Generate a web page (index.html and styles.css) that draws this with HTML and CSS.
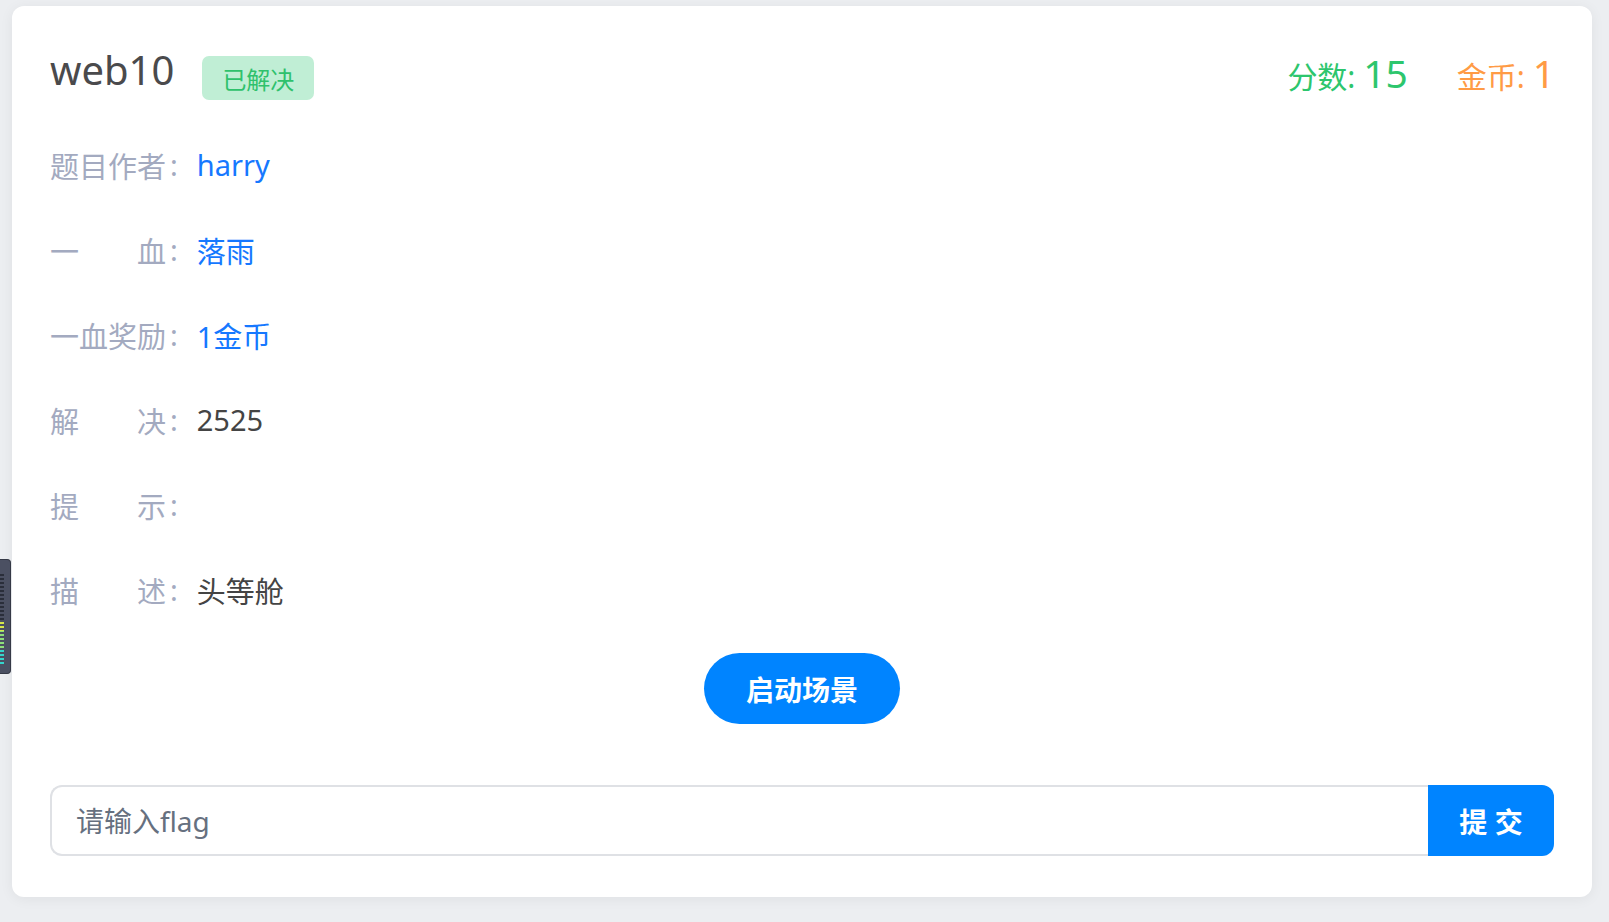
FILE: index.html
```html
<!DOCTYPE html>
<html lang="zh">
<head>
<meta charset="utf-8">
<title>web10</title>
<link rel="stylesheet" href="styles.css">
</head>
<body>
<div class="side-widget"><div class="dashes"></div></div>
<div class="card">
  <div class="header">
    <div class="title-wrap">
      <h1 class="title">web10</h1>
      <span class="badge">已解决</span>
    </div>
    <div class="stats">
      <span class="stat score">分数: <b>15</b></span>
      <span class="stat coin">金币: <b>1</b></span>
    </div>
  </div>
  <div class="rows">
    <div class="row"><span class="label"><span class="name">题目作者</span><span class="colon">:</span></span><span class="value link">harry</span></div>
    <div class="row"><span class="label"><span class="name">一血</span><span class="colon">:</span></span><span class="value link">落雨</span></div>
    <div class="row"><span class="label"><span class="name">一血奖励</span><span class="colon">:</span></span><span class="value link">1金币</span></div>
    <div class="row"><span class="label"><span class="name">解决</span><span class="colon">:</span></span><span class="value">2525</span></div>
    <div class="row"><span class="label"><span class="name">提示</span><span class="colon">:</span></span><span class="value"></span></div>
    <div class="row"><span class="label"><span class="name">描述</span><span class="colon">:</span></span><span class="value">头等舱</span></div>
  </div>
  <div class="launch-wrap"><button class="launch">启动场景</button></div>
  <div class="flag-row">
    <input class="flag-input" type="text" placeholder="请输入flag">
    <button class="submit">提 交</button>
  </div>
</div>
</body>
</html>
```
FILE: styles.css
```css
* { box-sizing: border-box; }
html, body { margin: 0; padding: 0; }
body {
  background: #eceef1;
  font-family: "Noto Sans", "Noto Sans CJK SC", sans-serif;
  width: 1609px;
  height: 922px;
  overflow: hidden;
  position: relative;
}
.card {
  margin: 6px 17px 0 12px;
  height: 891px;
  background: #fff;
  border-radius: 12px;
  box-shadow: 0 2px 14px rgba(0,0,0,0.06);
  padding: 50px 38px 36px 38px;
  display: flex;
  flex-direction: column;
}
.header {
  display: flex;
  justify-content: space-between;
  align-items: flex-start;
  height: 44px;
}
.title-wrap { display: flex; align-items: flex-start; }
.title {
  margin: -8px 0 0 0;
  font-size: 40px;
  line-height: 44px;
  font-weight: 400;
  color: #4a4a4c;
}
.badge {
  margin-left: 28px;
  width: 112px;
  height: 44px;
  border-radius: 7px;
  background: #c0eed5;
  color: #2fc16c;
  font-size: 24px;
  display: flex;
  align-items: center;
  justify-content: center;
}
.stats { display: flex; gap: 49px; margin-top: -5px; margin-right: -1px; align-items: baseline; }
.stat { font-size: 30px; line-height: 44px; }
.stat b { font-weight: 400; font-size: 39px; }
.score { color: #2dc66d; }
.coin { color: #ff9b45; }
.rows { margin-top: 22px; display: flex; flex-direction: column; }
.row {
  height: 85px;
  display: flex;
  align-items: center;
  font-size: 29px;
}
.label { color: #a3aac0; display: flex; align-items: center; margin-right: 19px; }
.colon { margin-left: 4px; }
.name {
  display: inline-block;
  width: 4em;
  text-align: justify;
  text-align-last: justify;
}
.value { color: #444; }
.value.link { color: #1678ff; }
.launch-wrap { display: flex; justify-content: center; margin-top: 21px; }
.launch {
  width: 196px;
  height: 71px;
  border: none;
  border-radius: 36px;
  background: #0084ff;
  color: #fff;
  font-family: inherit;
  font-size: 28px;
  font-weight: 700;
}
.flag-row { display: flex; margin-top: 61px; height: 71px; }
.flag-input {
  flex: 1;
  height: 71px;
  border: 2px solid #dfe1e5;
  border-right: none;
  border-radius: 12px 0 0 12px;
  padding: 0 0 0 24px;
  font-family: inherit;
  font-size: 28px;
  color: #333;
  outline: none;
}
.flag-input::placeholder { color: #66707f; }
.submit {
  width: 126px;
  height: 71px;
  border: none;
  border-radius: 0 12px 12px 0;
  background: #0084ff;
  color: #fff;
  font-family: inherit;
  font-size: 28px;
  font-weight: 700;
  letter-spacing: 0;
  padding: 0;
}
.side-widget {
  position: absolute;
  left: 0;
  top: 559px;
  width: 11px;
  height: 115px;
  background: #4b5062;
  border: 1px solid #353946;
  border-left: none;
  border-radius: 0 4px 4px 0;
}
.dashes {
  position: absolute;
  left: 0;
  top: 14px;
  width: 4px;
  height: 92px;
  background:
    repeating-linear-gradient(to bottom, transparent 0 2px, rgba(75,80,98,1) 2px 4px),
    linear-gradient(to bottom, #2a2e3a 0 52%, #d6e84a 52% 62%, #8ee07a 62% 82%, #35d6cc 82% 100%);
}
```
